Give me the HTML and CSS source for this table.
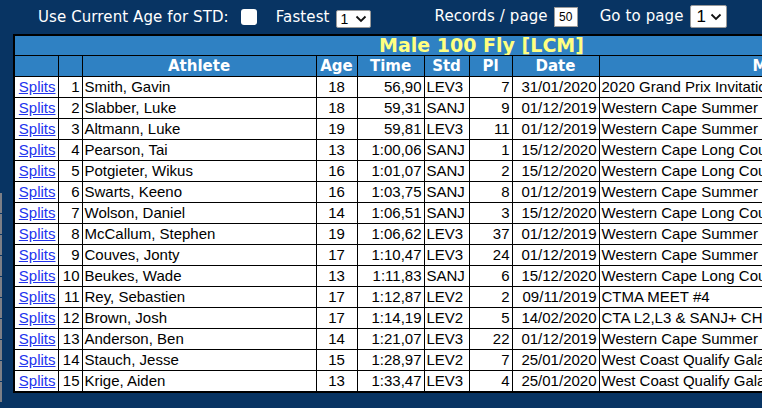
FILE: index.html
```html
<!DOCTYPE html>
<html>
<head>
<meta charset="utf-8">
<link rel="stylesheet" href="styles.css">
</head>
<body>
<div class="edge"><span></span><span></span><span></span><span></span><span></span><span></span><span></span><span></span><span></span><span></span></div>
<div class="topbar">
  <span class="lbl">Use Current Age for STD:</span>
  <span class="check"></span>
  <span class="lbl fastest">Fastest</span>
  <span class="sel sel-small">1<svg width="12" height="8" viewBox="0 0 12 8"><path d="M1.5 1.5 L6 6 L10.5 1.5" fill="none" stroke="#111" stroke-width="1.8"/></svg></span>
  <span class="lbl records">Records / page</span>
  <span class="num">50</span>
  <span class="lbl goto">Go to page</span>
  <span class="sel sel-big">1<svg width="12" height="8" viewBox="0 0 12 8"><path d="M1.5 1.5 L6 6 L10.5 1.5" fill="none" stroke="#111" stroke-width="1.8"/></svg></span>
</div>
<table class="results">
  <colgroup>
    <col class="c-splits"><col class="c-num"><col class="c-ath"><col class="c-age"><col class="c-time"><col class="c-std"><col class="c-pl"><col class="c-date"><col class="c-meet">
  </colgroup>
  <tr class="title"><td colspan="9">Male 100 Fly [LCM]</td></tr>
  <tr class="head"><td></td><td></td><td>Athlete</td><td>Age</td><td>Time</td><td>Std</td><td>Pl</td><td>Date</td><td>Meet</td></tr>
  <tr><td class="r"><a href="#">Splits</a></td><td class="r">1</td><td>Smith, Gavin</td><td class="c">18</td><td class="r">56,90</td><td>LEV3</td><td class="r">7</td><td class="r">31/01/2020</td><td>2020 Grand Prix Invitational</td></tr>
  <tr><td class="r"><a href="#">Splits</a></td><td class="r">2</td><td>Slabber, Luke</td><td class="c">18</td><td class="r">59,31</td><td>SANJ</td><td class="r">9</td><td class="r">01/12/2019</td><td>Western Cape Summer Championships</td></tr>
  <tr><td class="r"><a href="#">Splits</a></td><td class="r">3</td><td>Altmann, Luke</td><td class="c">19</td><td class="r">59,81</td><td>LEV3</td><td class="r">11</td><td class="r">01/12/2019</td><td>Western Cape Summer Championships</td></tr>
  <tr><td class="r"><a href="#">Splits</a></td><td class="r">4</td><td>Pearson, Tai</td><td class="c">13</td><td class="r">1:00,06</td><td>SANJ</td><td class="r">1</td><td class="r">15/12/2020</td><td>Western Cape Long Course Championships</td></tr>
  <tr><td class="r"><a href="#">Splits</a></td><td class="r">5</td><td>Potgieter, Wikus</td><td class="c">16</td><td class="r">1:01,07</td><td>SANJ</td><td class="r">2</td><td class="r">15/12/2020</td><td>Western Cape Long Course Championships</td></tr>
  <tr><td class="r"><a href="#">Splits</a></td><td class="r">6</td><td>Swarts, Keeno</td><td class="c">16</td><td class="r">1:03,75</td><td>SANJ</td><td class="r">8</td><td class="r">01/12/2019</td><td>Western Cape Summer Championships</td></tr>
  <tr><td class="r"><a href="#">Splits</a></td><td class="r">7</td><td>Wolson, Daniel</td><td class="c">14</td><td class="r">1:06,51</td><td>SANJ</td><td class="r">3</td><td class="r">15/12/2020</td><td>Western Cape Long Course Championships</td></tr>
  <tr><td class="r"><a href="#">Splits</a></td><td class="r">8</td><td>McCallum, Stephen</td><td class="c">19</td><td class="r">1:06,62</td><td>LEV3</td><td class="r">37</td><td class="r">01/12/2019</td><td>Western Cape Summer Championships</td></tr>
  <tr><td class="r"><a href="#">Splits</a></td><td class="r">9</td><td>Couves, Jonty</td><td class="c">17</td><td class="r">1:10,47</td><td>LEV3</td><td class="r">24</td><td class="r">01/12/2019</td><td>Western Cape Summer Championships</td></tr>
  <tr><td class="r"><a href="#">Splits</a></td><td class="r">10</td><td>Beukes, Wade</td><td class="c">13</td><td class="r">1:11,83</td><td>SANJ</td><td class="r">6</td><td class="r">15/12/2020</td><td>Western Cape Long Course Championships</td></tr>
  <tr><td class="r"><a href="#">Splits</a></td><td class="r">11</td><td>Rey, Sebastien</td><td class="c">17</td><td class="r">1:12,87</td><td>LEV2</td><td class="r">2</td><td class="r">09/11/2019</td><td>CTMA MEET #4</td></tr>
  <tr><td class="r"><a href="#">Splits</a></td><td class="r">12</td><td>Brown, Josh</td><td class="c">17</td><td class="r">1:14,19</td><td>LEV2</td><td class="r">5</td><td class="r">14/02/2020</td><td>CTA L2,L3 &amp; SANJ+ CHAMPS</td></tr>
  <tr><td class="r"><a href="#">Splits</a></td><td class="r">13</td><td>Anderson, Ben</td><td class="c">14</td><td class="r">1:21,07</td><td>LEV3</td><td class="r">22</td><td class="r">01/12/2019</td><td>Western Cape Summer Championships</td></tr>
  <tr><td class="r"><a href="#">Splits</a></td><td class="r">14</td><td>Stauch, Jesse</td><td class="c">15</td><td class="r">1:28,97</td><td>LEV2</td><td class="r">7</td><td class="r">25/01/2020</td><td>West Coast Qualify Gala</td></tr>
  <tr><td class="r"><a href="#">Splits</a></td><td class="r">15</td><td>Krige, Aiden</td><td class="c">13</td><td class="r">1:33,47</td><td>LEV3</td><td class="r">4</td><td class="r">25/01/2020</td><td>West Coast Qualify Gala</td></tr>
</table>
</body>
</html>
```
FILE: styles.css
```css
html, body {
  margin: 0;
  padding: 0;
}
body {
  background: #083463;
  width: 762px;
  height: 408px;
  overflow: hidden;
  position: relative;
  font-family: "Liberation Sans", Arial, sans-serif;
}
.edge {
  position: absolute;
  left: 0;
  top: 193px;
  width: 2px;
  display: flex;
  flex-direction: column;
}
.edge span {
  display: block;
  height: 20px;
  margin-bottom: 1px;
  background: #7d7f86;
}
.topbar {
  height: 34px;
  display: flex;
  align-items: center;
  padding-left: 38px;
  color: #ffffff;
  font-family: "DejaVu Sans", Verdana, sans-serif;
  font-size: 15px;
  box-sizing: border-box;
}
.lbl {
  white-space: nowrap;
  letter-spacing: 0.1px;
}
.check {
  width: 16px;
  height: 16px;
  background: #fff;
  border-radius: 3px;
  margin-left: 12px;
  margin-top: -1px;
}
.fastest {
  margin-left: 19px;
}
.sel {
  display: inline-flex;
  align-items: center;
  justify-content: space-between;
  background: #fff;
  color: #000;
  border: 1px solid #9a9a9a;
  border-radius: 2px;
  box-sizing: border-box;
  font-family: "Liberation Sans", Arial, sans-serif;
}
.sel-small {
  width: 35px;
  height: 18px;
  margin-left: 6px;
  margin-top: 3px;
  padding: 0 3px 0 4px;
  font-size: 14px;
}
.sel-big {
  width: 37px;
  height: 23px;
  margin-left: 6px;
  margin-top: -1px;
  padding: 0 4px 0 6px;
  font-size: 17px;
}
.records {
  margin-left: 64px;
  margin-top: -3px;
}
.num {
  width: 24px;
  height: 20px;
  margin-left: 6px;
  margin-top: -1px;
  background: #fff;
  color: #000;
  border: 1px solid #9a9a9a;
  box-sizing: border-box;
  font-family: "Liberation Sans", Arial, sans-serif;
  font-size: 12px;
  line-height: 18px;
  text-align: center;
}
.goto {
  margin-left: 22px;
  margin-top: -3px;
}
.results {
  margin-left: 13px;
  border-collapse: collapse;
  table-layout: fixed;
  width: 936px;
  border: 2px solid #000;
  background: #fff;
  font-size: 15px;
  color: #000;
}
.c-splits { width: 44px; }
.c-num { width: 24px; }
.c-ath { width: 234px; }
.c-age { width: 41px; }
.c-time { width: 67px; }
.c-std { width: 45px; }
.c-pl { width: 43px; }
.c-date { width: 87px; }
.c-meet { width: 350px; }
.results td {
  border: 1px solid #000;
  height: 20px;
  padding: 0 2px;
  line-height: 20px;
  white-space: nowrap;
  overflow: hidden;
  box-sizing: border-box;
}
.results tr.title td {
  background: #2f81c3;
  color: #ffff80;
  font-family: "DejaVu Sans", Verdana, sans-serif;
  font-weight: bold;
  font-size: 19px;
  text-align: center;
  height: 20px;
  line-height: 19px;
}
.results tr.head td {
  background: #2f81c3;
  color: #fff;
  font-family: "DejaVu Sans", Verdana, sans-serif;
  font-weight: bold;
  font-size: 15px;
  text-align: center;
  height: 21px;
}
.results td.r { text-align: right; }
.results td.c { text-align: center; }
.results a {
  color: #2233ee;
  text-decoration: underline;
}
```
